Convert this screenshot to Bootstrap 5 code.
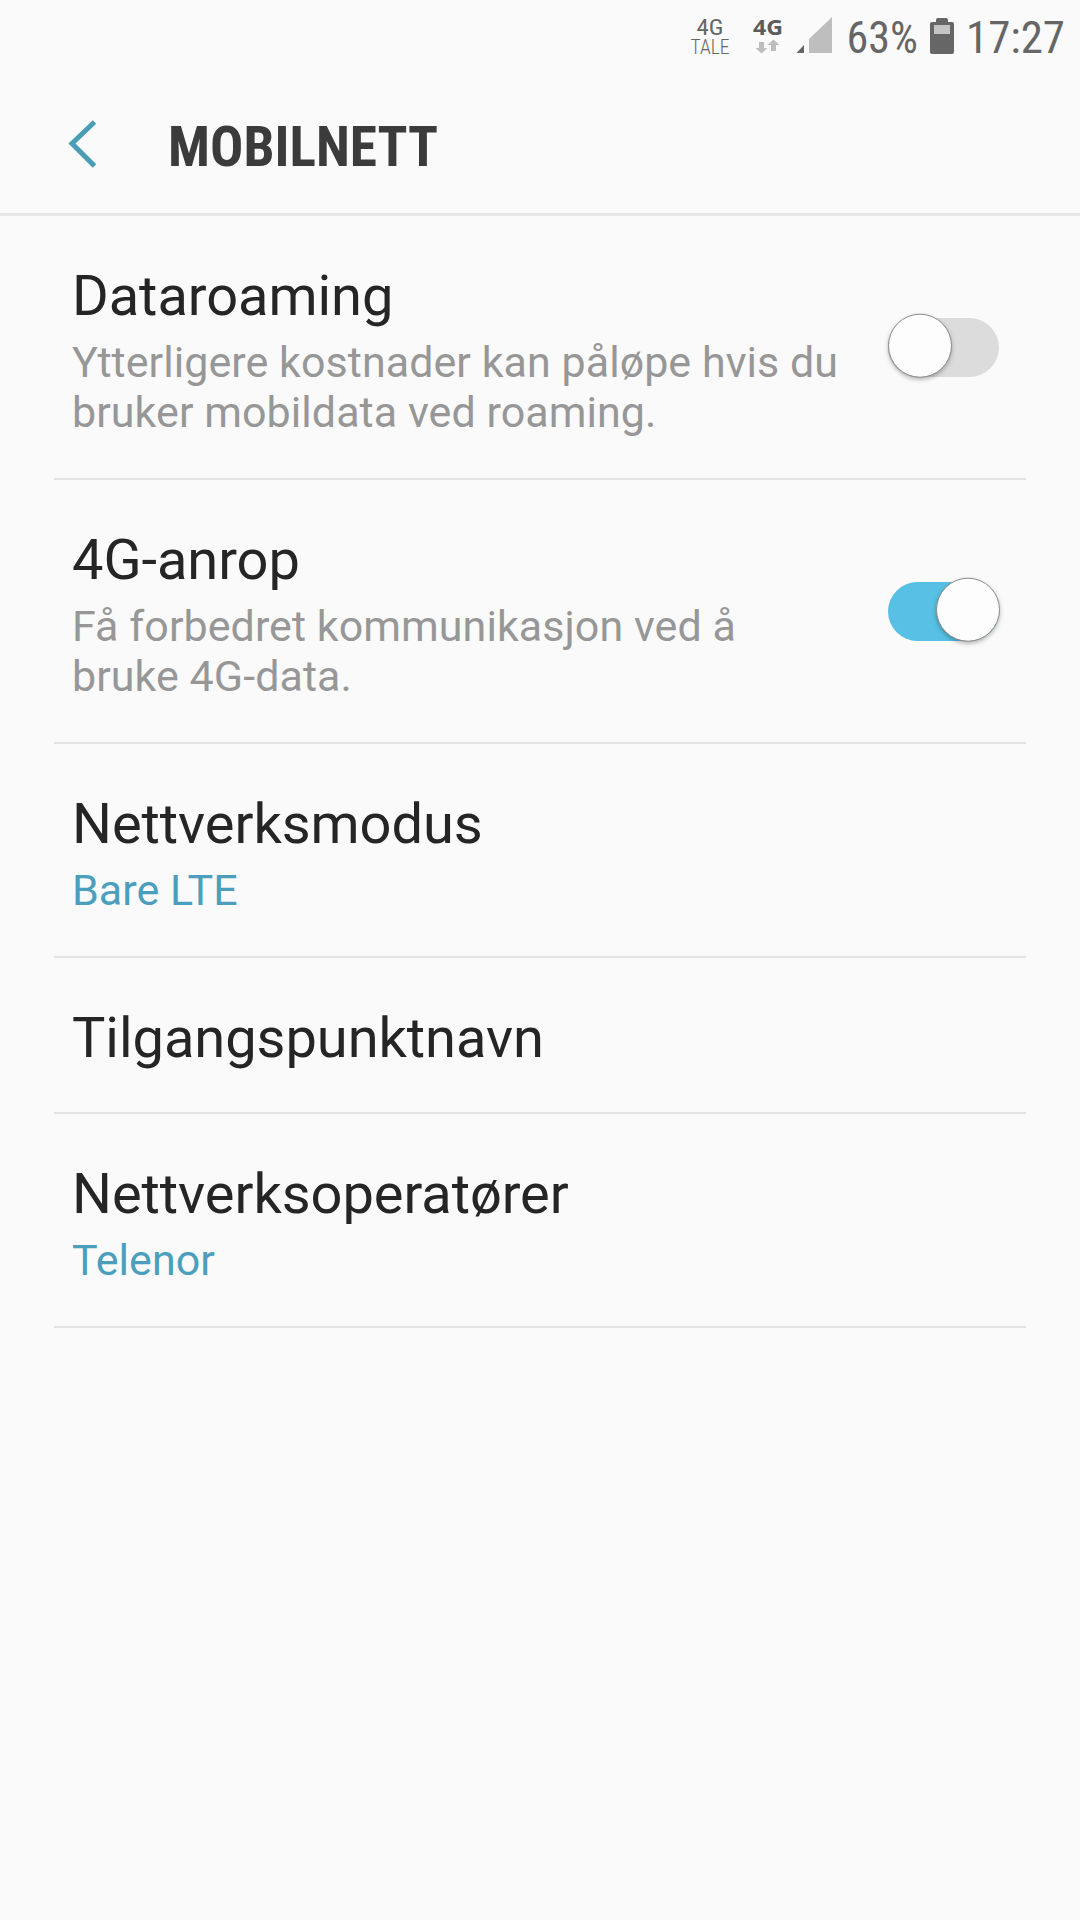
<!DOCTYPE html>
<html lang="nb">
<head>
<meta charset="utf-8">
<meta name="viewport" content="width=device-width, initial-scale=1">
<title>Mobilnett</title>
<link href="https://cdn.jsdelivr.net/npm/bootstrap@5.3.0/dist/css/bootstrap.min.css" rel="stylesheet">
<style>
  body { background: #fafafa; font-family: Roboto, "Noto Sans", sans-serif; color: #252525; min-height: 1920px; }
  svg { display: block; overflow: visible; }
  svg text { font-family: "Roboto Condensed", Roboto, sans-serif; font-stretch: condensed; }
  .statusbar { height: 72px; padding-right: 14px; }
  .statusbar svg { height: 72px; flex: none; }
  .titlebar { height: 144px; border-bottom: 3px solid #e6e6e6; }
  .back-btn { margin-left: 66px; }
  .settings { margin: 0 54px; }
  .setting { padding: 47px 26px 40px 18px; border-bottom: 2px solid #e4e4e4; }
  .setting-title { font-size: 56px; line-height: 67px; letter-spacing: -.05px; }
  .setting-text { font-size: 43px; line-height: 50px; letter-spacing: .06px; margin: 7px 0 1px; color: #979797; }
  .setting-value { color: #4b9fbd; }
  .copy { width: 780px; }
  .toggle-btn { height: 66px; margin-bottom: 8px; }
  .knob { fill: #fdfdfd; stroke: #8a8a8a; stroke-width: 1; filter: drop-shadow(0 2px 2px rgba(0,0,0,.28)); }
</style>
</head>
<body>
<div class="statusbar d-flex justify-content-end">
  <svg width="62" viewBox="691 0 62 72" fill="#666">
    <text x="696.5" y="34.5" font-size="22.500" textLength="27" lengthAdjust="spacingAndGlyphs">4G</text>
    <text x="690.5" y="54" font-size="19.5" font-weight="300" textLength="39" lengthAdjust="spacingAndGlyphs">TALE</text>
  </svg>
  <svg width="43" viewBox="753 0 43 72">
    <text x="753" y="35" font-size="21.5" font-weight="700" fill="#5c5c5c" style="font-family:'Noto Sans',sans-serif;font-stretch:normal" textLength="30" lengthAdjust="spacingAndGlyphs">4G</text>
    <path fill="#bdbdbd" d="M759 42h5v6h3.500l-6 5.500-6-5.500H759zM771 51h5v-6h3.500l-6-5.500-6 5.500H771z"/>
  </svg>
  <svg width="52" viewBox="796 0 52 72">
    <path fill="#666" d="M796.500 53L804 45v8z"/>
    <path fill="#bebebe" d="M809 53V39L832 17v36z"/>
  </svg>
  <svg width="82" viewBox="848 0 82 72" fill="#666">
    <text x="846.500" y="53" font-size="45" textLength="71.500" lengthAdjust="spacingAndGlyphs">63%</text>
  </svg>
  <svg width="38" viewBox="930 0 38 72">
    <path fill="#666" d="M932 22h4v-2q0-2 2-2h8q2 0 2 2v2h4q2 0 2 2v28q0 2-2 2h-20q-2 0-2-2V24q0-2 2-2z"/>
    <path fill="#c4c4c4" d="M934 25h16v9h-16z"/>
  </svg>
  <svg width="98" viewBox="968 0 98 72" fill="#666">
    <text x="966" y="53" font-size="45" textLength="99" lengthAdjust="spacingAndGlyphs">17:27</text>
  </svg>
</div>
<header class="titlebar d-flex">
  <button class="btn p-0 border-0 rounded-0 back-btn" type="button" aria-label="Tilbake">
    <svg width="102" height="141" viewBox="66 72 102 141" fill="none" stroke="#4b9db5" stroke-width="5"><path d="M94.500 122L72 143.500 94.500 166"/></svg>
  </button>
  <svg width="270" height="141" viewBox="168 72 270 141" fill="#3b3b3b">
    <text x="168" y="166.400" font-size="56" font-weight="700" textLength="270" lengthAdjust="spacingAndGlyphs">MOBILNETT</text>
  </svg>
</header>
<main class="settings">
  <section class="setting d-flex justify-content-between align-items-center">
    <div class="copy">
      <div class="setting-title">Dataroaming</div>
      <div class="setting-text">Ytterligere kostnader kan påløpe hvis du<br>bruker mobildata ved roaming.</div>
    </div>
    <button class="btn p-0 border-0 toggle-btn" type="button" role="switch" aria-checked="false" aria-label="Dataroaming">
      <svg width="112" height="66" viewBox="0 0 112 66"><rect x="0" y="4" width="111" height="59" rx="29.500" fill="#dcdcdc"/><circle class="knob" cx="32" cy="31.700" r="31.500"/></svg>
    </button>
  </section>
  <section class="setting d-flex justify-content-between align-items-center">
    <div class="copy">
      <div class="setting-title">4G-anrop</div>
      <div class="setting-text">Få forbedret kommunikasjon ved å<br>bruke 4G-data.</div>
    </div>
    <button class="btn p-0 border-0 toggle-btn" type="button" role="switch" aria-checked="true" aria-label="4G-anrop">
      <svg width="112" height="66" viewBox="0 0 112 66"><rect x="0" y="4" width="111" height="59" rx="29.500" fill="#58c0e4"/><circle class="knob" cx="80" cy="31.700" r="31.500"/></svg>
    </button>
  </section>
  <section class="setting">
    <div class="setting-title">Nettverksmodus</div>
    <div class="setting-text setting-value">Bare LTE</div>
  </section>
  <section class="setting">
    <div class="setting-title">Tilgangspunktnavn</div>
  </section>
  <section class="setting">
    <div class="setting-title">Nettverksoperatører</div>
    <div class="setting-text setting-value">Telenor</div>
  </section>
</main>
<script src="https://cdn.jsdelivr.net/npm/bootstrap@5.3.0/dist/js/bootstrap.bundle.min.js"></script>
</body>
</html>
